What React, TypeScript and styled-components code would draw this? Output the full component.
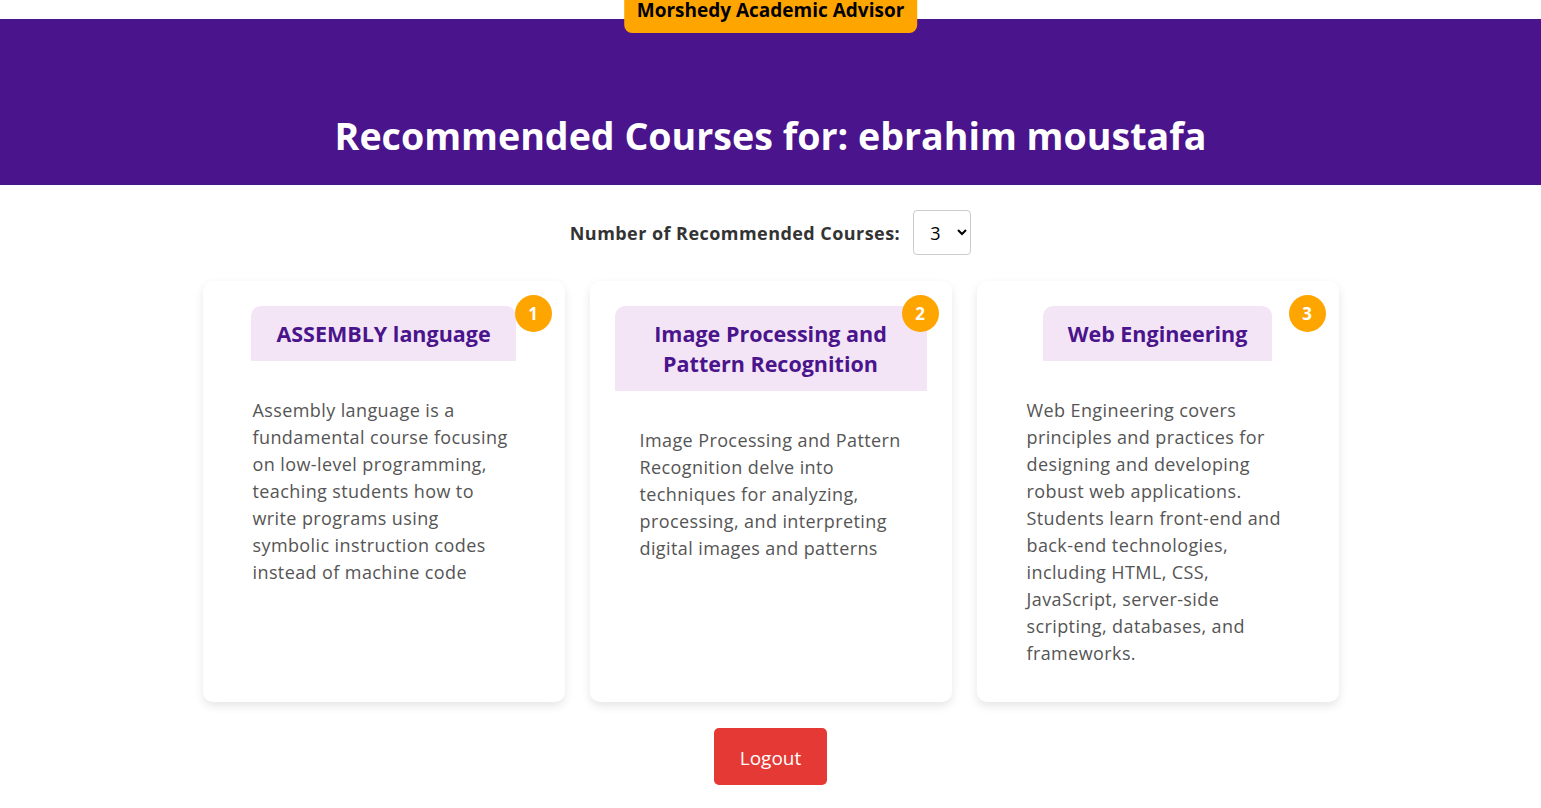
import React, { useState } from "react";
import styled, { createGlobalStyle } from "styled-components";

const Global = createGlobalStyle`
  html, body { margin: 0; padding: 0; background: #ffffff; }
  body { font-family: "Open Sans", "Noto Sans", sans-serif; }
  * { box-sizing: border-box; }
`;

const Page = styled.div`
  min-height: 808px;
  padding-top: 19px;
  position: relative;
  display: flex;
  flex-direction: column;
  align-items: center;
`;

const Brand = styled.div`
  position: absolute;
  top: 0;
  left: 50%;
  transform: translateX(-50%);
  background: #ffa500;
  color: #000;
  font-weight: 700;
  font-size: 19px;
  line-height: 18px;
  padding: 1px 13px 14px;
  border-radius: 0 0 8px 8px;
  white-space: nowrap;
  z-index: 2;
`;

const Header = styled.header`
  width: 100%;
  height: 166px;
  background: #4a148c;
  display: flex;
  align-items: flex-end;
  justify-content: center;
  padding-bottom: 24px;
`;

const Title = styled.h1`
  margin: 0;
  color: #ffffff;
  font-size: 37.6px;
  font-weight: 700;
  line-height: 50px;
`;

const Controls = styled.div`
  margin-top: 25px;
  display: flex;
  align-items: center;
  gap: 13px;
`;

const Label = styled.label`
  font-size: 18px;
  font-weight: 700;
  letter-spacing: 0.45px;
  color: #333;
`;

const Select = styled.select`
  width: 58px;
  height: 45px;
  font-size: 18px;
  padding: 0 8px 0 12px;
  border: 1px solid #ccc;
  border-radius: 4px;
  background: #fff;
  color: #000;
  font-family: "Open Sans", sans-serif;
`;

const Grid = styled.div`
  margin-top: 26px;
  display: grid;
  grid-template-columns: repeat(3, 362px);
  gap: 25px;
`;

const Card = styled.div`
  position: relative;
  background: #fff;
  border-radius: 10px;
  box-shadow: 0 4px 10px rgba(0, 0, 0, 0.1);
  padding: 25px 25px 35px;
  display: flex;
  flex-direction: column;
  align-items: center;
  height: 421px;
`;

const CourseTitle = styled.h2`
  margin: 0;
  background: #f3e5f5;
  color: #4a148c;
  font-size: 21.5px;
  font-weight: 700;
  line-height: 30px;
  padding: 13px 25px 12px;
  border-radius: 10px 10px 0 0;
  text-align: center;
`;

const Description = styled.p`
  margin: 36px 0 0;
  padding: 0 25px;
  align-self: stretch;
  color: #555;
  font-size: 18px;
  letter-spacing: 0.4px;
  line-height: 27px;
`;

const Rank = styled.span`
  position: absolute;
  top: 14px;
  right: 13px;
  width: 37px;
  height: 37px;
  border-radius: 50%;
  background: #ffa500;
  color: #fff;
  font-weight: 700;
  font-size: 17px;
  display: flex;
  align-items: center;
  justify-content: center;
`;

const Logout = styled.button`
  margin-top: 26px;
  background: #e53935;
  color: #fff;
  border: none;
  border-radius: 5px;
  font-family: "Open Sans", sans-serif;
  font-size: 19px;
  width: 113px;
  height: 57px;
  padding: 2px 0 0;
  cursor: pointer;
`;

const courses = [
  {
    title: "ASSEMBLY language",
    desc: "Assembly language is a fundamental course focusing on low-level programming, teaching students how to write programs using symbolic instruction codes instead of machine code",
  },
  {
    title: "Image Processing and Pattern Recognition",
    desc: "Image Processing and Pattern Recognition delve into techniques for analyzing, processing, and interpreting digital images and patterns",
  },
  {
    title: "Web Engineering",
    desc: "Web Engineering covers principles and practices for designing and developing robust web applications. Students learn front-end and back-end technologies, including HTML, CSS, JavaScript, server-side scripting, databases, and frameworks.",
  },
];

export default function App() {
  const [count, setCount] = useState(3);
  return (
    <Page>
      <Global />
      <Brand>Morshedy Academic Advisor</Brand>
      <Header>
        <Title>Recommended Courses for: ebrahim moustafa</Title>
      </Header>
      <Controls>
        <Label htmlFor="count">Number of Recommended Courses:</Label>
        <Select id="count" value={count} onChange={(e) => setCount(Number(e.target.value))}>
          {[1, 2, 3, 4, 5].map((n) => (
            <option key={n} value={n}>{n}</option>
          ))}
        </Select>
      </Controls>
      <Grid>
        {courses.slice(0, count).map((c, i) => (
          <Card key={c.title}>
            <Rank>{i + 1}</Rank>
            <CourseTitle>{c.title}</CourseTitle>
            <Description>{c.desc}</Description>
          </Card>
        ))}
      </Grid>
      <Logout>Logout</Logout>
    </Page>
  );
}
